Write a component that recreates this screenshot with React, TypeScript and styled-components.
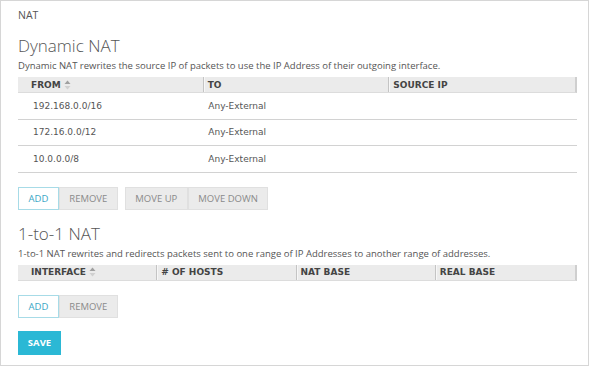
import React from 'react';
import styled, { createGlobalStyle } from 'styled-components';

const GlobalStyle = createGlobalStyle`
    html, body {
        margin: 0;
        padding: 0;
        background: #ffffff;
    }
    * {
        box-sizing: border-box;
    }
`;

interface Column {
    label: string;
    sortable?: boolean;
}

const dynamicColumns: Column[] = [
    { label: 'FROM', sortable: true },
    { label: 'TO' },
    { label: 'SOURCE IP' },
];

const dynamicRows = [
    ['192.168.0.0/16', 'Any-External', ''],
    ['172.16.0.0/12', 'Any-External', ''],
    ['10.0.0.0/8', 'Any-External', ''],
];

const oneToOneColumns: Column[] = [
    { label: 'INTERFACE', sortable: true },
    { label: '# OF HOSTS' },
    { label: 'NAT BASE' },
    { label: 'REAL BASE' },
];

const SortIcon = () => (
    <svg width="7" height="10" viewBox="0 0 7 10">
        <path d="M3.5 0.5 L6.5 4 L0.5 4 Z" fill="#a0a0a0" />
        <path d="M3.5 9.5 L6.5 6 L0.5 6 Z" fill="#d0d0d0" />
    </svg>
);

const DataTable: React.FC<{ columns: Column[]; rows: string[][] }> = ({ columns, rows }) => (
    <Table>
        <HeaderRow count={columns.length}>
            {columns.map((col, i) => (
                <HeaderCell key={col.label} first={i === 0} last={i === columns.length - 1}>
                    {col.label}
                    {col.sortable && <SortIcon />}
                </HeaderCell>
            ))}
        </HeaderRow>
        {rows.map((row) => (
            <BodyRow key={row[0]} count={columns.length}>
                {row.map((cell, i) => (
                    <BodyCell key={i} first={i === 0}>{cell}</BodyCell>
                ))}
            </BodyRow>
        ))}
    </Table>
);

export default function App() {
    return (
        <>
            <GlobalStyle />
            <Page>
                <Breadcrumb>NAT</Breadcrumb>

                <SectionTitle>Dynamic NAT</SectionTitle>
                <Description>Dynamic NAT rewrites the source IP of packets to use the IP Address of their outgoing interface.</Description>
                <DataTable columns={dynamicColumns} rows={dynamicRows} />
                <Toolbar>
                    <ButtonGroup>
                        <Button primary>ADD</Button>
                        <Button>REMOVE</Button>
                    </ButtonGroup>
                    <ButtonGroup>
                        <Button>MOVE UP</Button>
                        <Button>MOVE DOWN</Button>
                    </ButtonGroup>
                </Toolbar>

                <SectionTitle second>1-to-1 NAT</SectionTitle>
                <Description>1-to-1 NAT rewrites and redirects packets sent to one range of IP Addresses to another range of addresses.</Description>
                <DataTable columns={oneToOneColumns} rows={[]} />
                <Toolbar>
                    <ButtonGroup>
                        <Button primary>ADD</Button>
                        <Button>REMOVE</Button>
                    </ButtonGroup>
                </Toolbar>

                <SaveButton>SAVE</SaveButton>
            </Page>
        </>
    );
}

const Page = styled.div`
    width: 589px;
    height: 366px;
    border: 1px solid #d6d6d6;
    padding: 0 11px 0 17px;
    display: flex;
    flex-direction: column;
    font-family: "Open Sans", "Liberation Sans", sans-serif;
    color: #4a4a4a;
`;

const Breadcrumb = styled.div`
    margin-top: 7px;
    height: 14px;
    line-height: 14px;
    font-size: 10.5px;
    color: #555;
`;

const SectionTitle = styled.h2<{ second?: boolean }>`
    margin: ${(props) => (props.second ? '13px' : '13px')} 0 0 0;
    height: 22px;
    line-height: 22px;
    font-size: 17px;
    font-weight: 300;
    color: #555;
`;

const Description = styled.p`
    margin: 1px 0 0 0;
    height: 15px;
    line-height: 15px;
    font-size: 9.5px;
    color: #555;
`;

const Table = styled.div`
    margin-top: 4px;
    display: flex;
    flex-direction: column;
    font-family: "DejaVu Sans", Verdana, sans-serif;
`;

const HeaderRow = styled.div<{ count: number }>`
    display: grid;
    grid-template-columns: repeat(${(props) => props.count}, 1fr);
    height: 16px;
    background: #ebebeb;
    border-bottom: 1px solid #dcdcdc;
    border-right: 2px solid #cfcfcf;
`;

const HeaderCell = styled.div<{ first?: boolean; last?: boolean }>`
    display: flex;
    align-items: center;
    gap: 3px;
    padding-left: ${(props) => (props.first ? '13px' : '4px')};
    font-size: 9px;
    font-weight: bold;
    color: #444;
    border-right: ${(props) => (props.last ? 'none' : '1px solid #c4c4c4')};
    box-shadow: ${(props) => (props.last ? 'none' : '1px 0 0 #f7f7f7')};
`;

const BodyRow = styled.div<{ count: number }>`
    display: grid;
    grid-template-columns: repeat(${(props) => props.count}, 1fr);
    height: 26.5px;
    border-bottom: 1px solid #d2d2d2;
`;

const BodyCell = styled.div<{ first?: boolean }>`
    display: flex;
    align-items: center;
    padding-left: ${(props) => (props.first ? '15px' : '4px')};
    font-size: 9px;
    color: #555;
`;

const Toolbar = styled.div`
    margin-top: 14px;
    display: flex;
    gap: 7px;
`;

const ButtonGroup = styled.div`
    display: flex;
`;

const Button = styled.button<{ primary?: boolean }>`
    height: 23px;
    padding: 0 9.5px;
    font-family: "Open Sans", "Liberation Sans", sans-serif;
    font-size: 9.5px;
    color: ${(props) => (props.primary ? '#3aa6c6' : '#8a8a8a')};
    background: ${(props) => (props.primary ? '#ffffff' : '#ebebeb')};
    border: 1px solid ${(props) => (props.primary ? '#a7dbe7' : '#e0e0e0')};
    border-radius: 0;
    cursor: pointer;
`;

const SaveButton = styled.button`
    margin-top: 13px;
    align-self: flex-start;
    width: 43px;
    height: 24px;
    padding: 0;
    font-family: "Open Sans", "Liberation Sans", sans-serif;
    font-size: 9.5px;
    font-weight: bold;
    color: #ffffff;
    background: #2bb8d5;
    border: none;
    border-radius: 0;
    cursor: pointer;
`;
